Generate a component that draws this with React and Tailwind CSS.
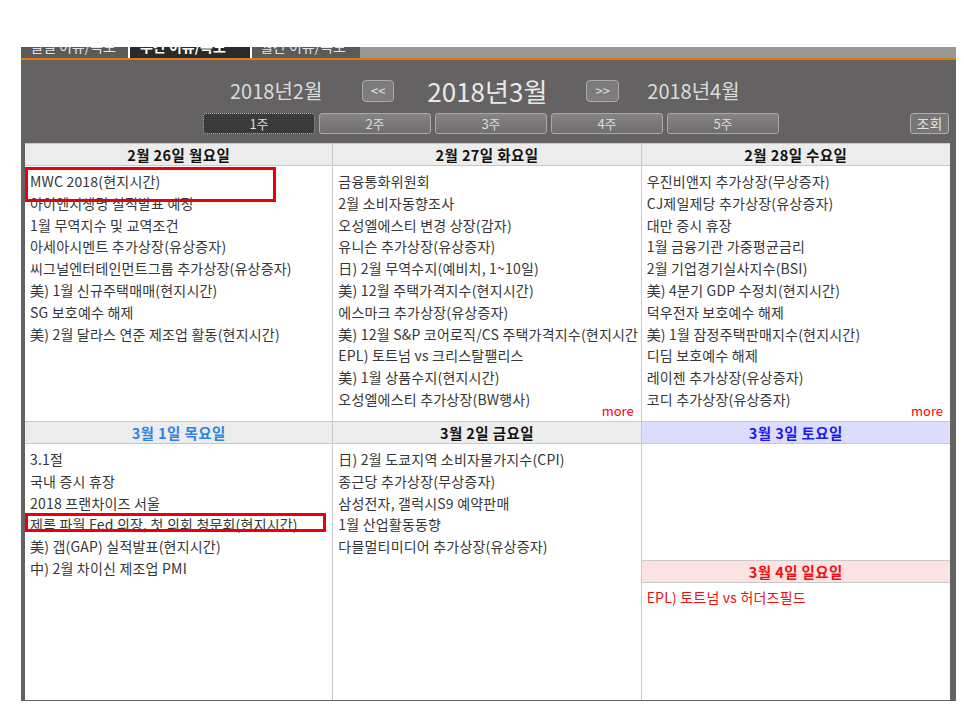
import React from "react";

const F = { fontFamily: '"Noto Sans CJK KR", "Noto Sans", sans-serif' };

const r1c1 = ["MWC 2018(현지시간)", "아이엔지생명 실적발표 예정", "1월 무역지수 및 교역조건", "아세아시멘트 추가상장(유상증자)", "씨그널엔터테인먼트그룹 추가상장(유상증자)", "美) 1월 신규주택매매(현지시간)", "SG 보호예수 해제", "美) 2월 달라스 연준 제조업 활동(현지시간)"];
const r1c2 = ["금융통화위원회", "2월 소비자동향조사", "오성엘에스티 변경 상장(감자)", "유니슨 추가상장(유상증자)", "日) 2월 무역수지(예비치, 1~10일)", "美) 12월 주택가격지수(현지시간)", "에스마크 추가상장(유상증자)", "美) 12월 S&P 코어로직/CS 주택가격지수(현지시간)", "EPL) 토트넘 vs 크리스탈팰리스", "美) 1월 상품수지(현지시간)", "오성엘에스티 추가상장(BW행사)"];
const r1c3 = ["우진비앤지 추가상장(무상증자)", "CJ제일제당 추가상장(유상증자)", "대만 증시 휴장", "1월 금융기관 가중평균금리", "2월 기업경기실사지수(BSI)", "美) 4분기 GDP 수정치(현지시간)", "덕우전자 보호예수 해제", "美) 1월 잠정주택판매지수(현지시간)", "디딤 보호예수 해제", "레이젠 추가상장(유상증자)", "코디 추가상장(유상증자)"];
const r2c1 = ["3.1절", "국내 증시 휴장", "2018 프랜차이즈 서울", "제롬 파월 Fed 의장, 첫 의회 청문회(현지시간)", "美) 갭(GAP) 실적발표(현지시간)", "中) 2월 차이신 제조업 PMI"];
const r2c2 = ["日) 2월 도쿄지역 소비자물가지수(CPI)", "종근당 추가상장(무상증자)", "삼성전자, 갤럭시S9 예약판매", "1월 산업활동동향", "다믈멀티미디어 추가상장(유상증자)"];

function Head({ children, cls = "bg-[#ececec] text-[#111]" }) {
  return (
    <div className={`h-[22px] flex items-center justify-center border-b border-[#c9c9c9] text-[14.5px] font-bold tracking-[0.4px] ${cls}`}>
      {children}
    </div>
  );
}

function List({ items, color = "text-[#363636]" }) {
  return (
    <div className={`pt-[5px] pl-[5px] pr-[2px] text-[14px] leading-[21.8px] tracking-[0.2px] ${color}`}>
      {items.map((t, i) => (
        <div key={i} className="whitespace-nowrap overflow-hidden">{t}</div>
      ))}
    </div>
  );
}

function More() {
  return <div className="absolute right-[7px] bottom-[2px] text-[13px] leading-[16px] text-[#f00]">more</div>;
}

function WeekBtn({ children, active }) {
  return (
    <div
      className={
        active
          ? "w-[112px] h-[21px] flex items-center justify-center rounded-[3px] bg-[#3b3a3a] border border-dotted border-[#bdbdbd] text-[13px] text-[#dcdcdc]"
          : "w-[112px] h-[21px] flex items-center justify-center rounded-[3px] bg-gradient-to-b from-[#858383] to-[#6f6d6d] border border-[#a9a7a7] text-[13px] text-[#dedede]"
      }
    >
      {children}
    </div>
  );
}

export default function App() {
  return (
    <div className="relative w-[964px] h-[727px] bg-white overflow-hidden" style={F}>
      <div className="pt-[47px] pl-[21px] w-[956px]">
        {/* tabs */}
        <div className="flex h-[11px] bg-white">
          <div className="w-[107px] bg-[#5c5959] overflow-hidden text-[14px] leading-none text-[#e4e4e4] pl-[9px]">
            <div className="-mt-[8px] whitespace-nowrap">일별 이슈/속보</div>
          </div>
          <div className="w-[120px] ml-[2px] bg-[#2b2a2a] overflow-hidden text-[14px] leading-none text-white font-bold pl-[10px]">
            <div className="-mt-[8px] whitespace-nowrap">주간 이슈/속보</div>
          </div>
          <div className="w-[108px] ml-[2px] bg-[#5c5959] overflow-hidden text-[14px] leading-none text-[#e4e4e4] pl-[8px]">
            <div className="-mt-[8px] whitespace-nowrap">월간 이슈/속보</div>
          </div>
          <div className="flex-1 bg-[#9b9795]"></div>
        </div>
        <div className="h-[2px] bg-[#e07a10]"></div>
        {/* panel */}
        <div className="bg-[#646262] pl-[4px] pr-[6px] pt-[20px] h-[641px]">
          <div className="flex items-center h-[22px]">
            <div className="ml-[205px] text-[20px] leading-none text-[#dcdcdc]">2018년2월</div>
            <div className="ml-[40px] w-[32px] h-[22px] rounded-[4px] bg-[#7d7b7b] border border-[#aaa8a8] flex items-center justify-center text-[13px] text-[#e2e2e2]">&lt;&lt;</div>
            <div className="ml-[33px] text-[26px] leading-none text-[#e8e8e8]">2018년3월</div>
            <div className="ml-[39px] w-[33px] h-[22px] rounded-[4px] bg-[#7d7b7b] border border-[#aaa8a8] flex items-center justify-center text-[13px] text-[#e2e2e2]">&gt;&gt;</div>
            <div className="ml-[28px] text-[20px] leading-none text-[#dcdcdc]">2018년4월</div>
          </div>
          <div className="flex items-center mt-[11px] h-[21px]">
            <div className="ml-[178px] flex gap-[4px]">
              <WeekBtn active>1주</WeekBtn>
              <WeekBtn>2주</WeekBtn>
              <WeekBtn>3주</WeekBtn>
              <WeekBtn>4주</WeekBtn>
              <WeekBtn>5주</WeekBtn>
            </div>
            <div className="ml-auto mr-[1px] w-[39px] h-[21px] rounded-[3px] bg-[#777575] border border-[#b0aeae] flex items-center justify-center text-[14px] text-[#e2e2e2]">조회</div>
          </div>
          {/* table */}
          <div className="mt-[9px] bg-white">
            <div className="grid grid-cols-3 border-t border-[#c9c9c9]">
              <div className="relative border-r border-[#c9c9c9] h-[278px] border-b">
                <Head>2월 26일 월요일</Head>
                <List items={r1c1} />
              </div>
              <div className="relative border-r border-[#c9c9c9] h-[278px] border-b">
                <Head>2월 27일 화요일</Head>
                <List items={r1c2} />
                <More />
              </div>
              <div className="relative h-[278px] border-b border-[#c9c9c9]">
                <Head>2월 28일 수요일</Head>
                <List items={r1c3} />
                <More />
              </div>
            </div>
            <div className="grid grid-cols-3">
              <div className="border-r border-[#c9c9c9] h-[278px]">
                <Head cls="bg-[#ececec] text-[#2b84e6]">3월 1일 목요일</Head>
                <List items={r2c1} />
              </div>
              <div className="border-r border-[#c9c9c9] h-[278px]">
                <Head>3월 2일 금요일</Head>
                <List items={r2c2} />
              </div>
              <div className="h-[278px] flex flex-col">
                <Head cls="bg-[#dcdcfd] text-[#1a1aee]">3월 3일 토요일</Head>
                <div className="h-[117px] border-b border-[#c9c9c9]"></div>
                <Head cls="bg-[#fde2e2] text-[#ee1111]">3월 4일 일요일</Head>
                <div className="pt-[4px] pl-[5px] text-[14px] leading-[21.8px] tracking-[0.2px] text-[#f01010]">EPL) 토트넘 vs 허더즈필드</div>
              </div>
            </div>
          </div>
        </div>
      </div>
      {/* annotation boxes */}
      <div className="absolute left-[25px] top-[167px] w-[251px] h-[35px] border-[3px] border-[#e8000b]"></div>
      <div className="absolute left-[25px] top-[513px] w-[301px] h-[19px] border-[3px] border-[#e8000b]"></div>
    </div>
  );
}
